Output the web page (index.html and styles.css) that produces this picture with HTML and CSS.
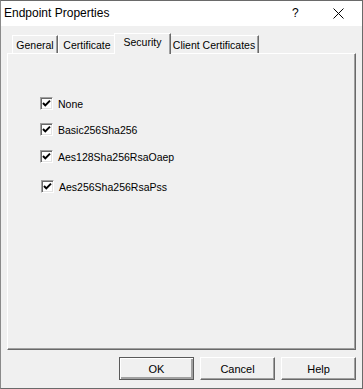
FILE: index.html
```html
<!DOCTYPE html>
<html>
	<head>
		<title>Endpoint Properties</title>
		<link rel="stylesheet" href="styles.css">
	</head>
	<body>
		<div id="window">
			<div id="title-bar">
				<span id="title-text">Endpoint Properties</span>
				<span id="title-help">?</span>
				<span id="title-close">
					<svg width="11" height="11" viewBox="0 0 11 11">
						<path d="M0.5 0.5 L10.5 10.5 M10.5 0.5 L0.5 10.5" stroke="#000" stroke-width="1" fill="none" />
					</svg>
				</span>
			</div>
			<div id="content">
				<div id="tabs">
					<div class="tab tab-general">General</div>
					<div class="tab tab-cert">Certificate</div>
					<div class="tab tab-security selected">Security</div>
					<div class="tab tab-client">Client Certificates</div>
				</div>
				<div id="panel">
					<div class="check-row row1">
						<span class="check-box"><svg width="9" height="9" viewBox="0 0 9 9"><polyline points="1,4 3.3,6.4 8,1.6" stroke="#000" stroke-width="2" fill="none" /></svg></span>
						<span class="check-label">None</span>
					</div>
					<div class="check-row row2">
						<span class="check-box"><svg width="9" height="9" viewBox="0 0 9 9"><polyline points="1,4 3.3,6.4 8,1.6" stroke="#000" stroke-width="2" fill="none" /></svg></span>
						<span class="check-label">Basic256Sha256</span>
					</div>
					<div class="check-row row3">
						<span class="check-box"><svg width="9" height="9" viewBox="0 0 9 9"><polyline points="1,4 3.3,6.4 8,1.6" stroke="#000" stroke-width="2" fill="none" /></svg></span>
						<span class="check-label">Aes128Sha256RsaOaep</span>
					</div>
					<div class="check-row row4">
						<span class="check-box"><svg width="9" height="9" viewBox="0 0 9 9"><polyline points="1,4 3.3,6.4 8,1.6" stroke="#000" stroke-width="2" fill="none" /></svg></span>
						<span class="check-label">Aes256Sha256RsaPss</span>
					</div>
				</div>
				<div id="button-row">
					<button type="button" class="btn btn-default">OK</button>
					<button type="button" class="btn">Cancel</button>
					<button type="button" class="btn">Help</button>
				</div>
			</div>
		</div>
	</body>
</html>
```

FILE: styles.css
```css
html {
	height: 100%;
}

body {
	margin: 0;
	font-family: "Liberation Sans", Arial, sans-serif;
	color: #000;
	background-color: #f0f0f0;
}

#window {
	width: 363px;
	height: 389px;
	box-sizing: border-box;
	border: 1px solid #6a6a6a;
	border-left-color: #8a8a8a;
	background-color: #f0f0f0;
	display: flex;
	flex-direction: column;
}

/* タイトルバー */
#title-bar {
	height: 25px;
	background-color: #fff;
	display: flex;
	align-items: center;
	font-size: 12px;
}

#title-text {
	flex: 1;
	padding-left: 3px;
	padding-bottom: 1px;
}

#title-help {
	width: 12px;
	margin-right: 29px;
	padding-bottom: 1px;
}

#title-close {
	width: 11px;
	height: 11px;
	margin-right: 18px;
	display: flex;
}

#content {
	flex: 1;
	padding: 7px 6px 0 6px;
	display: flex;
	flex-direction: column;
}

/* タブ */
#tabs {
	height: 20px;
	padding-left: 5px;
	display: flex;
	align-items: flex-end;
	font-size: 10.5px;
}

.tab {
	height: 18px;
	box-sizing: border-box;
	border-top: 1px solid #fff;
	border-left: 1px solid #fff;
	border-right: 1px solid #696969;
	box-shadow: inset -1px 0 0 #a0a0a0;
	display: flex;
	align-items: center;
	justify-content: center;
	padding-top: 1px;
}

.tab-general {
	width: 46px;
}

.tab-cert {
	width: 58px;
}

.tab-security {
	width: 53px;
}

.tab-client {
	width: 90px;
}

.tab.selected {
	height: 21px;
	margin: 0 -2px -1px -2px;
	width: 57px;
	background-color: #f0f0f0;
	position: relative;
	z-index: 1;
	align-items: flex-start;
	padding-top: 2px;
}

#panel {
	height: 297px;
	box-sizing: border-box;
	border-top: 1px solid #fff;
	border-left: 1px solid #fff;
	border-right: 1px solid #696969;
	border-bottom: 1px solid #696969;
	box-shadow: inset -1px -1px 0 #a0a0a0;
	padding: 43px 0 0 32px;
	font-size: 10.5px;
}

/* チェックボックス */
.check-row {
	display: flex;
	align-items: center;
	height: 13px;
}

.row1 {
	margin-bottom: 13px;
}

.row2 {
	margin-bottom: 14px;
}

.row3 {
	margin-bottom: 17px;
}

.row4 {
	padding-left: 1px;
}

.check-box {
	width: 13px;
	height: 13px;
	box-sizing: border-box;
	background-color: #fff;
	border-top: 1px solid #a0a0a0;
	border-left: 1px solid #a0a0a0;
	border-right: 1px solid #fff;
	border-bottom: 1px solid #fff;
	box-shadow: inset 1px 1px 0 #696969, inset -1px -1px 0 #e3e3e3;
	display: flex;
	align-items: center;
	justify-content: center;
}

.check-label {
	margin-left: 5px;
}

/* ボタン */
#button-row {
	margin-top: 7px;
	display: flex;
	justify-content: flex-end;
	gap: 6px;
	padding-right: 0;
}

.btn {
	width: 75px;
	height: 23px;
	box-sizing: border-box;
	font-family: "Liberation Sans", Arial, sans-serif;
	font-size: 11px;
	color: #000;
	background-color: #f0f0f0;
	border-top: 1px solid #fff;
	border-left: 1px solid #fff;
	border-right: 1px solid #696969;
	border-bottom: 1px solid #696969;
	box-shadow: inset -1px -1px 0 #a0a0a0;
	padding: 0;
}

.btn-default {
	border: 1px solid #5a5a5a;
	box-shadow: inset 1px 1px 0 #fff, inset -2px -2px 0 #a0a0a0;
}
```
